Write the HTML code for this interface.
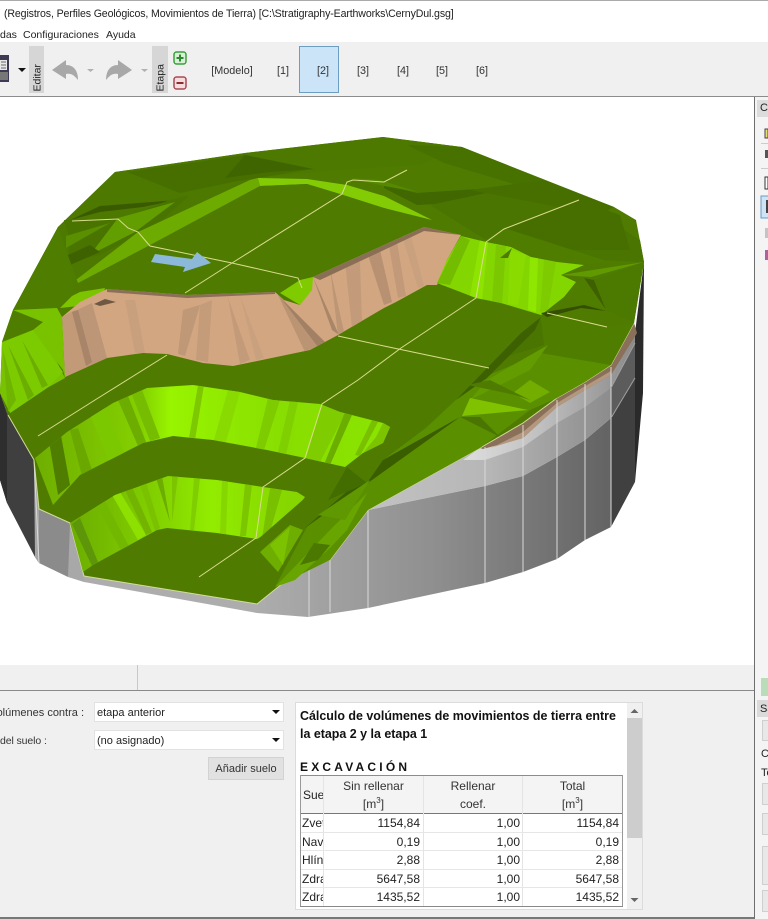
<!DOCTYPE html>
<html lang="es"><head><meta charset="utf-8"><title>CernyDul</title>
<style>
html,body{margin:0;padding:0;background:#fff}
body{position:relative;width:768px;height:919px;overflow:hidden;font-family:"Liberation Sans",sans-serif;font-size:11px;color:#222}
.a{position:absolute;white-space:nowrap}
.num{position:absolute;text-align:right;font-size:12px;line-height:18px}
.hd{position:absolute;text-align:center;font-size:12px;color:#333;line-height:18px}
.sel{position:absolute;left:95px;width:188px;background:#fff;border:0;box-shadow:0 0 0 1px #e2e2e2;font-size:11px;line-height:20px;text-indent:2px}
.sel i{position:absolute;right:3px;top:7px;border:4px solid transparent;border-top:4px solid #111;border-bottom:0}
.tab{position:absolute;top:65px;font-size:10.8px;text-align:center;width:60px;color:#333}
.box{position:absolute;left:762px;width:8px;background:#e8e8e8;border:1px solid #cfcfcf;box-sizing:border-box}
</style></head><body>

<div class="a" style="left:0;top:0;width:768px;height:1px;background:#aaa"></div>
<div class="a" style="left:4px;top:8px;font-size:10.6px;letter-spacing:-.13px">(Registros, Perfiles Geológicos, Movimientos de Tierra) [C:\Stratigraphy-Earthworks\CernyDul.gsg]</div>
<div class="a" style="left:0;top:29px;font-size:10.5px">das</div>
<div class="a" style="left:23px;top:29px;font-size:10.5px">Configuraciones</div>
<div class="a" style="left:106px;top:29px;font-size:10.5px">Ayuda</div>

<!-- toolbar -->
<div class="a" style="left:0;top:42px;width:768px;height:54px;background:#f0f0f0"></div>
<div class="a" style="left:0;top:96px;width:768px;height:1px;background:#8c8c8c"></div>
<div class="a" style="left:29px;top:46px;width:15px;height:47px;background:#d6d6d6"></div>
<div class="a" style="left:152px;top:46px;width:16px;height:47px;background:#d6d6d6"></div>
<div class="a" style="left:14px;top:63px;width:47px;transform:rotate(-90deg);font-size:10.5px;height:14px;line-height:14px;text-indent:2px">Editar</div>
<div class="a" style="left:137px;top:63px;width:47px;transform:rotate(-90deg);font-size:10.5px;height:14px;line-height:14px;text-indent:2px">Etapa</div>
<div class="a" style="left:299px;top:46px;width:38px;height:45px;background:#cce4f7;border:1px solid #6d9dbf"></div>
<div class="tab" style="left:202px">[Modelo]</div>
<div class="tab" style="left:253px">[1]</div>
<div class="tab" style="left:293px">[2]</div>
<div class="tab" style="left:333px">[3]</div>
<div class="tab" style="left:373px">[4]</div>
<div class="tab" style="left:412px">[5]</div>
<div class="tab" style="left:452px">[6]</div>

<svg class="a" style="left:0;top:42px" width="200" height="54" viewBox="0 42 200 54">
<rect x="0" y="55" width="9" height="27" fill="#3c3a55"/>
<rect x="0" y="60" width="7" height="10" fill="#e8e8e8"/>
<path d="M1 62h5M1 65h5M1 68h5" stroke="#666" stroke-width="1"/>
<rect x="0" y="72" width="8" height="8" fill="#777"/>
<path d="M18 68h8l-4 4z" fill="#111"/>
<path d="M52 70 L66 60 L66 65 C74 65 78 71 78 80 C74 75 71 73 66 74 L66 79 Z" fill="#a8a8a8"/>
<path d="M87 69h7l-3.500 3z" fill="#b0b0b0"/>
<path d="M132 70 L118 60 L118 65 C110 65 106 71 106 80 C110 75 113 73 118 74 L118 79 Z" fill="#a8a8a8"/>
<path d="M141 69h7l-3.500 3z" fill="#b0b0b0"/>
<rect x="174" y="52" width="12" height="12" rx="2.500" fill="#d8f0d8" stroke="#3aa03a" stroke-width="1.500"/>
<path d="M176.500 58h7M180 54.500v7" stroke="#2c8a2c" stroke-width="2"/>
<rect x="174" y="77" width="12" height="12" rx="2.500" fill="#f6dcdc" stroke="#a84a55" stroke-width="1.500"/>
<path d="M176.500 83h7" stroke="#8c2a35" stroke-width="2"/>
</svg>

<!-- 3D model -->
<svg class="a" style="left:0;top:97px;filter:blur(.35px)" width="754" height="568" viewBox="0 97 754 568">
<defs>
<linearGradient id="g" gradientUnits="userSpaceOnUse" x1="257" y1="0" x2="611" y2="0"><stop offset="0" stop-color="#adadad"/><stop offset=".5" stop-color="#8f8f8f"/><stop offset="1" stop-color="#636363"/></linearGradient>
<linearGradient id="g2" gradientUnits="userSpaceOnUse" x1="368" y1="0" x2="611" y2="0"><stop offset="0" stop-color="#c2c2c2"/><stop offset=".5" stop-color="#b6b6b6"/><stop offset="1" stop-color="#8c8c8c"/></linearGradient>
<linearGradient id="g3" gradientUnits="userSpaceOnUse" x1="463" y1="0" x2="635" y2="0"><stop offset="0" stop-color="#dedede"/><stop offset=".45" stop-color="#c0c0c0"/><stop offset="1" stop-color="#8a8a8a"/></linearGradient>
<linearGradient id="s1" gradientUnits="userSpaceOnUse" x1="35" y1="0" x2="390" y2="0"><stop offset="0" stop-color="#6fae00"/><stop offset=".3" stop-color="#84d000"/><stop offset=".38" stop-color="#98f400"/><stop offset=".7" stop-color="#88de00"/><stop offset="1" stop-color="#8be400"/></linearGradient>
<linearGradient id="s2" gradientUnits="userSpaceOnUse" x1="70" y1="0" x2="305" y2="0"><stop offset="0" stop-color="#6cad00"/><stop offset=".4" stop-color="#84d400"/><stop offset=".6" stop-color="#92ec00"/><stop offset="1" stop-color="#84d200"/></linearGradient>
<clipPath id="c1"><path d="M35 458L67 432L113 403L147 388L193 385L240 392L273 400L320 404L340 412L383 423L390 427L383 443L363 453L345 467L305 458L267 450L213 440L173 436L143 443L80 475L53 505Z"/></clipPath>
<clipPath id="c2"><path d="M70 523L115 495L168 476L217 480L263 487L297 492L305 497L293 513L273 530L257 539L217 533L167 528L157 530L93 565L83 572Z"/></clipPath>
<clipPath id="c3"><path d="M107 289L187 295L275 292L284 300L300 305L313 277L384 245L424 227L461 235L447 260L437 285L427 285L396 302L384 308L338 335L310 350L233 366L203 363L167 354L143 353L107 358L65 377L62 317L80 302Z"/></clipPath>
<clipPath id="c4"><path d="M461 236L486 242L511 247L531 257L557 262L584 265L561 275L576 282L564 297L541 315L501 303L476 298L437 283L447 260Z"/></clipPath>
</defs>

<!-- side walls -->
<path d="M0 393L8 415L34 460L39 563L35 557L7 503L0 480Z" fill="#3f3f3f"/>
<path d="M0 393L7 415L7 503L0 480Z" fill="#2e2e2e"/>
<path d="M34 460L39 509L39 563L35 557Z" fill="#a6a6a6"/>
<path d="M39 509L70 523L76 549L68 577L39 563Z" fill="#8b8b8b"/>
<path d="M70 523L84 576L84 582L68 577Z" fill="#a8a8a8"/>
<path d="M84 576L257 604L257 613L84 582Z" fill="#adadad"/>
<path d="M257 604L308 563L330 560L368 510L485 486L523 476L557 457L585 440L611 418L611 527L585 540L557 559L523 572L485 583L368 608L308 617L257 613Z" fill="url(#g)"/>
<path d="M368 510L480 448L523 423L557 398L585 382L611 365L611 418L585 440L557 457L523 476L485 486Z" fill="url(#g2)"/>
<path d="M463 460L480 448L523 423L557 398L585 382L611 365L635 325L635 343L611 388L585 407L557 423L523 447L485 460Z" fill="url(#g3)"/>
<path d="M611 388L635 343L635 378L611 418Z" fill="#5c5c5c"/>
<path d="M611 418L635 378L635 482L611 527Z" fill="#404040"/>
<path d="M635 333L644 262L643 393L635 482Z" fill="#2a2a2a"/>
<path d="M480 448L523 423L557 398L585 382L611 365L634 323L637 333L611 375L587 389L557 407L523 438L483 449Z" fill="#8a7058"/>
<path d="M495 446L523 432L557 403L587 385L611 371L611 375L587 389L557 407L523 438L490 448Z" fill="#b3977e"/>
<g stroke="#d9d9d9" stroke-width="1" fill="none">
<path d="M309 564V617M330 560V612M368 510V608M485 447V583M523 425V572M557 400V559M585 384V540M611 367V527"/>
<path d="M34 460L39 563M70 523L84 576"/>
</g>
<path d="M611 388L635 343M611 418L635 378" stroke="#a0a0a0" stroke-width="1" fill="none"/>

<!-- surface base -->
<path d="M0 393L2 342L13 310L58 227L115 172L245 153L383 137L462 147L614 207L636 220L644 262L634 323L611 365L585 382L557 398L523 423L480 448L368 510L330 560L308 563L257 604L84 576L70 523L39 509L34 460L8 415L0 393Z" fill="#4f7c00"/>
<path d="M8 415L34 460L39 509L70 523L84 576L257 604L308 563L330 560L368 510L480 448L523 423L557 398L585 382L611 365L634 323" fill="none" stroke="#d3dc9c" stroke-width="1"/>

<!-- back ridge facets -->
<path d="M115 172L245 153L383 137L462 147L420 165L340 170L258 178L200 205L120 250L72 283L13 310L58 227Z" fill="#4d7900"/>
<path d="M127 172L245 155L313 169L233 182L180 193Z" fill="#476f00"/>
<path d="M245 155L313 169L270 172L225 178Z" fill="#3f6500"/>
<path d="M70 220L100 206L177 200L143 207L100 212Z" fill="#3a5a00"/>
<path d="M64 220L118 219L170 200L190 195L160 222L100 255L68 262L70 240Z" fill="#4a7400"/>
<path d="M118 218L175 202L135 232L90 255Z" fill="#639e00"/>
<path d="M66 236L110 223L80 240L66 248Z" fill="#5a8f00"/>
<path d="M66 256L90 245L100 252L70 265Z" fill="#3e6200"/>
<path d="M250 180L258 178L260 186L150 245L78 283L72 283L138 232Z" fill="#6eab00"/>
<path d="M258 178L307 179L347 185L384 196L432 220L384 208L340 194L307 184L260 186Z" fill="#83cc05"/>
<path d="M58 227L66 250L78 283L72 283L80 300L57 308L13 310Z" fill="#4f7d00"/>
<path d="M407 145L462 147L544 180L517 185L444 163Z" fill="#487200"/>
<path d="M384 185L417 193L507 187L457 203L417 205L384 188Z" fill="#406700"/>
<path d="M350 178L380 180L418 192L384 186Z" fill="#568900"/>
<path d="M430 205L500 190L600 215L640 240L644 262L560 258L504 229L486 240Z" fill="#4a7500"/>
<path d="M470 190L544 180L614 207L600 215Z" fill="#476f00"/>
<path d="M504 229L579 200L620 215L630 250L560 250Z" fill="#476f00"/>
<path d="M486 240L504 228L610 262L584 265L557 262Z" fill="#4f7d00"/>
<path d="M561 275L644 262L591 277Z" fill="#609a00"/>
<path d="M584 278L606 310L594 280Z" fill="#3e6000"/>
<path d="M594 280L644 262L634 323L606 310Z" fill="#4c7900"/>
<path d="M560 295L576 282L584 278L606 310L580 302Z" fill="#4f7d00"/>

<!-- top plateau -->
<path d="M260 186L307 184L340 194L384 208L432 222L461 232L424 225L384 243L313 275L298 278L232 263L150 246Z" fill="#4f7c00"/>
<path d="M78 284L150 246L298 278L275 290L187 293L107 287L84 297Z" fill="#4f7c00"/>
<path d="M80 292L105 288L100 305L88 305L60 308L72 296Z" fill="#7cc400"/>

<!-- brown cliff -->
<path d="M107 289L187 295L275 292L284 300L300 305L313 277L384 245L424 227L461 235L447 260L437 285L427 285L396 302L384 308L338 335L310 350L233 366L203 363L167 354L143 353L107 358L65 377L62 317L80 302Z" fill="#d2a680"/>
<g clip-path="url(#c3)">
<path d="M62 317L92 303L107 358L85 368Z" fill="#bd9677"/>
<path d="M62 317L75 310L88 370L65 377Z" fill="#c29a78"/>
<path d="M72 312L78 310L92 362L86 366Z" fill="#a88568"/>
<path d="M125 300L135 300L145 353L135 353Z" fill="#c8a07d"/>
<path d="M183 310L200 305L185 356L178 354Z" fill="#bf9877"/>
<path d="M200 305L212 300L208 362L196 360Z" fill="#c49c7a"/>
<path d="M228 298L250 360L240 364Z" fill="#c39b7a"/>
<path d="M240 295L264 358L256 360Z" fill="#c9a17e"/>
<path d="M277 293L320 345L305 352Z" fill="#bb9474"/>
<path d="M280 297L326 343L318 347Z" fill="#a28064"/>
<path d="M313 277L332 330L339 335Z" fill="#a98668"/>
<path d="M330 268L338 335L344 332Z" fill="#bd9676"/>
<path d="M345 262L352 328L362 322L360 262Z" fill="#c39b7a"/>
<path d="M368 255L384 305L392 302L380 250Z" fill="#b89172"/>
<path d="M388 240L398 298L406 296L396 236Z" fill="#c29a79"/>
<path d="M402 236L418 288L424 286L410 232Z" fill="#c9a17e"/>
<path d="M107 289L275 292L275 294L187 298L107 292Z" fill="#8c6f58"/>
<path d="M313 277L384 245L424 227L461 235L424 231L384 250L320 280Z" fill="#8a6e56"/>
<path d="M94 304L105 299L116 302L100 306Z" fill="#6e5844"/>
</g>
<path d="M280 293L300 280L313 277L312 290L300 305Z" fill="#7fcb00"/>

<!-- right bright slope -->
<path d="M461 236L486 242L511 247L531 257L557 262L584 265L561 275L576 282L564 297L541 315L501 303L476 298L437 283L447 260Z" fill="#84d600"/>
<g clip-path="url(#c4)">
<path d="M461 236L470 240L450 285L437 283Z" fill="#74bc00"/>
<path d="M480 240L488 242L482 300L470 296Z" fill="#8ee400"/>
<path d="M496 245L506 246L502 305L492 302Z" fill="#7cc800"/>
<path d="M510 250L526 255L518 305L508 304Z" fill="#8adc00"/>
<path d="M530 257L538 258L536 312L528 310Z" fill="#8fe600"/>
<path d="M544 260L556 262L548 310L540 312Z" fill="#7ecc00"/>
<path d="M500 258L512 248L508 258Z" fill="#4f7c00"/>
</g>

<!-- left bright corner -->
<path d="M2 342L13 310L57 308L62 317L65 378L47 388L10 413L0 393Z" fill="#78c200"/>
<path d="M13 310L43 322L33 330L2 342Z" fill="#4f7d00"/>
<path d="M33 330L63 370L65 378L57 362Z" fill="#4f7d00"/>
<path d="M2 343L33 330L63 372L47 388L10 413Z" fill="#7ccb00"/>
<path d="M8 345L34 395L28 400Z" fill="#6bae00"/>
<path d="M22 340L48 385L42 388Z" fill="#6bae00"/>
<path d="M3 350L16 400L8 412Z" fill="#6fb400"/>

<!-- slope 1 -->
<path d="M35 458L67 432L113 403L147 388L193 385L240 392L273 400L320 404L340 412L383 423L390 427L383 443L363 453L345 467L305 458L267 450L213 440L173 436L143 443L80 475L53 505Z" fill="url(#s1)"/>
<g clip-path="url(#c1)">
<path d="M48 435L60 430L70 485L58 495Z" fill="#4f7d00"/>
<path d="M70 430L78 428L92 470L82 476Z" fill="#6aa800"/>
<path d="M90 415L105 408L125 455L110 462Z" fill="#7cc800"/>
<path d="M118 400L128 396L146 442L138 446Z" fill="#6cad00"/>
<path d="M132 395L142 390L160 438L150 441Z" fill="#76bc00"/>
<path d="M198 385L204 385L195 440L189 438Z" fill="#7dc800"/>
<path d="M228 390L240 392L226 442L214 440Z" fill="#88da00"/>
<path d="M268 398L280 400L264 450L256 448Z" fill="#7ecb00"/>
<path d="M290 400L298 402L286 455L278 452Z" fill="#80cf00"/>
<path d="M322 404L346 412L320 462L306 458Z" fill="#7fcc00"/>
<path d="M345 412L352 415L330 465L325 462Z" fill="#6cae00"/>
<path d="M372 420L378 422L360 456L355 455Z" fill="#78c000"/>
</g>
<path d="M383 423L390 427L383 443L363 453L376 437Z" fill="#7cc400"/>

<!-- slope 2 -->
<path d="M70 523L115 495L168 476L217 480L263 487L297 492L305 497L293 513L273 530L257 539L217 533L167 528L157 530L93 565L83 572Z" fill="url(#s2)"/>
<g clip-path="url(#c2)">
<path d="M72 524L80 518L98 562L92 566Z" fill="#5e960a"/>
<path d="M96 505L104 500L130 548L122 552Z" fill="#72b800"/>
<path d="M112 495L120 492L146 535L138 540Z" fill="#8ee000"/>
<path d="M125 490L132 487L152 532L146 535Z" fill="#72b400"/>
<path d="M140 485L146 482L160 528L155 531Z" fill="#7ac200"/>
<path d="M156 478L162 476L170 522Z" fill="#6cad00"/>
<path d="M172 476L178 476L172 522Z" fill="#7cc400"/>
<path d="M194 478L200 478L194 530L190 530Z" fill="#80ce00"/>
<path d="M222 480L228 481L226 534L220 534Z" fill="#86d600"/>
<path d="M245 484L252 485L246 536L240 536Z" fill="#7cc600"/>
<path d="M270 488L282 490L270 532L262 538Z" fill="#78c000"/>
<path d="M290 492L304 497L280 526Z" fill="#86d600"/>
</g>

<!-- lower right green -->
<path d="M275 587L307 527L383 460L427 427L477 380L541 353L611 365L585 382L557 398L530 410L480 448L368 510L330 560Z" fill="#5a8f00"/>
<path d="M541 317L547 317L607 327L634 323L611 365L541 353L524 333Z" fill="#4f7d00"/>
<path d="M524 333L541 320L544 345L496 360L487 368Z" fill="#4a7500"/>
<path d="M456 400L521 333L541 317L535 330L487 378Z" fill="#3d6100"/>
<path d="M487 380L548 345L530 370L470 400Z" fill="#629c00"/>
<path d="M541 313L584 305L606 311L581 308L547 317Z" fill="#344f00"/>
<path d="M513 393L530 380L550 392L530 403Z" fill="#72ad00"/>
<path d="M470 398L528 410L462 416Z" fill="#80c200"/>
<path d="M460 417L500 437L480 417Z" fill="#4a7500"/>
<path d="M468 385L490 380L530 400L515 395Z" fill="#4f7c00"/>
<path d="M305 528L460 417L383 460Z" fill="#3a5d00"/>
<path d="M328 500L347 467L367 483Z" fill="#446d00"/>
<path d="M347 467L383 445L390 430L427 427L383 460L367 483Z" fill="#4f7c00"/>
<path d="M260 552L290 525L303 530L278 572Z" fill="#6eae00"/>
<path d="M270 545L290 527L283 565Z" fill="#7cc200"/>
<path d="M275 587L330 530L367 493L347 530L330 548L295 580Z" fill="#68a500"/>
<path d="M318 515L370 480L345 520Z" fill="#5f9800"/>
<path d="M314 543L330 545L318 560L300 565Z" fill="#4b7800"/>
<path d="M257 540L305 498L293 522L260 552Z" fill="#4f7c00"/>

<!-- survey lines -->
<g fill="none" stroke="#d9dc8e" stroke-width="1">
<path d="M72 221L118 219L128 228L138 232L150 246L232 263L298 278L302 288"/>
<path d="M185 293L232 263L342 194L347 182L353 180L384 182L407 170"/>
<path d="M579 200L504 229L486 242L476 298L401 348L358 380L322 404L305 458L263 487L256 538L199 577"/>
<path d="M338 336L384 346L489 368"/>
<path d="M547 313L607 327"/>
<path d="M167 355L95 400L38 436"/>
</g>

<!-- arrow -->
<path d="M151 262L155 254L192 259L197 252L211 263L183 272L185 267Z" fill="#8cb9d9"/>
</svg>

<!-- status row -->
<div class="a" style="left:0;top:665px;width:754px;height:25px;background:#f0f0f0"></div>
<div class="a" style="left:137px;top:665px;width:1px;height:25px;background:#c8c8c8"></div>
<div class="a" style="left:0;top:690px;width:754px;height:1px;background:#8a8a8a"></div>

<!-- bottom panel -->
<div class="a" style="left:0;top:691px;width:754px;height:228px;background:#f0f0f0"></div>
<div class="a" style="left:0;top:917px;width:768px;height:2px;background:#777"></div>
<div class="a" style="right:684px;top:707px;font-size:11px;color:#333">olúmenes contra :</div>
<div class="a" style="left:0;top:735px;font-size:10.5px;letter-spacing:-.1px;color:#333">del suelo :</div>
<div class="sel" style="top:703px;height:18px">etapa anterior<i></i></div>
<div class="sel" style="top:731px;height:18px">(no asignado)<i></i></div>
<div class="a" style="left:208px;top:757px;width:76px;height:23px;background:#e1e1e1;box-shadow:inset 0 0 0 1px #d2d2d2;text-align:center;line-height:24px;font-size:11px;color:#333">Añadir suelo</div>

<!-- report -->
<div class="a" style="left:296px;top:703px;width:346px;height:206px;background:#fff;box-shadow:0 0 0 1px #dcdcdc"></div>
<div class="a" style="left:300px;top:707px;font-weight:bold;font-size:12.45px;line-height:18px;color:#111;width:326px;white-space:normal">Cálculo de volúmenes de movimientos de tierra entre<br>la etapa 2 y la etapa 1</div>
<div class="a" style="left:300px;top:760px;font-weight:bold;font-size:12px;letter-spacing:3.2px;color:#111">EXCAVACIÓN</div>

<div class="a" style="left:300px;top:776px;width:322px;height:37px;background:#f4f4f4"></div>
<div class="a" style="left:300px;top:775px;width:323px;height:1px;background:#8c8c8c"></div>
<div class="a" style="left:300px;top:813px;width:323px;height:1px;background:#777"></div>
<div class="a" style="left:300px;top:775px;width:1px;height:131px;background:#999"></div>
<div class="a" style="left:622px;top:775px;width:1px;height:131px;background:#999"></div>
<div class="a" style="left:300px;top:906px;width:323px;height:1px;background:#888"></div>
<div class="a" style="left:323px;top:776px;width:1px;height:130px;background:#e4e4e4"></div>
<div class="a" style="left:423px;top:776px;width:1px;height:130px;background:#e4e4e4"></div>
<div class="a" style="left:522px;top:776px;width:1px;height:130px;background:#e4e4e4"></div>
<div class="a" style="left:301px;top:832px;width:321px;height:1px;background:#e6e6e6"></div>
<div class="a" style="left:301px;top:850px;width:321px;height:1px;background:#e6e6e6"></div>
<div class="a" style="left:301px;top:869px;width:321px;height:1px;background:#e6e6e6"></div>
<div class="a" style="left:301px;top:887px;width:321px;height:1px;background:#e6e6e6"></div>

<div class="a" style="left:303px;top:786px;font-size:12px;line-height:18px;width:20px;overflow:hidden;color:#222">Sue</div>
<div class="hd" style="left:324px;top:777px;width:99px">Sin rellenar</div>
<div class="hd" style="left:324px;top:795px;width:99px">[m<sup style="font-size:8px;line-height:0">3</sup>]</div>
<div class="hd" style="left:424px;top:777px;width:98px">Rellenar</div>
<div class="hd" style="left:424px;top:795px;width:98px">coef.</div>
<div class="hd" style="left:523px;top:777px;width:99px">Total</div>
<div class="hd" style="left:523px;top:795px;width:99px">[m<sup style="font-size:8px;line-height:0">3</sup>]</div>

<div class="a" style="left:302px;top:814px;width:21px;overflow:hidden;font-size:12px;line-height:18px">Zvet</div>
<div class="a" style="left:302px;top:833px;width:21px;overflow:hidden;font-size:12px;line-height:18px">Nav</div>
<div class="a" style="left:302px;top:851px;width:21px;overflow:hidden;font-size:12px;line-height:18px">Hlín</div>
<div class="a" style="left:302px;top:870px;width:21px;overflow:hidden;font-size:12px;line-height:18px">Zdra</div>
<div class="a" style="left:302px;top:888px;width:21px;overflow:hidden;font-size:12px;line-height:18px">Zdra</div>

<div class="num" style="left:324px;top:814px;width:96px">1154,84</div><div class="num" style="left:424px;top:814px;width:96px">1,00</div><div class="num" style="left:523px;top:814px;width:96px">1154,84</div>
<div class="num" style="left:324px;top:833px;width:96px">0,19</div><div class="num" style="left:424px;top:833px;width:96px">1,00</div><div class="num" style="left:523px;top:833px;width:96px">0,19</div>
<div class="num" style="left:324px;top:851px;width:96px">2,88</div><div class="num" style="left:424px;top:851px;width:96px">1,00</div><div class="num" style="left:523px;top:851px;width:96px">2,88</div>
<div class="num" style="left:324px;top:870px;width:96px">5647,58</div><div class="num" style="left:424px;top:870px;width:96px">1,00</div><div class="num" style="left:523px;top:870px;width:96px">5647,58</div>
<div class="num" style="left:324px;top:888px;width:96px">1435,52</div><div class="num" style="left:424px;top:888px;width:96px">1,00</div><div class="num" style="left:523px;top:888px;width:96px">1435,52</div>

<!-- scrollbar -->
<div class="a" style="left:627px;top:703px;width:15px;height:206px;background:#f0f0f0"></div>
<div class="a" style="left:627px;top:718px;width:15px;height:120px;background:#cdcdcd"></div>
<svg class="a" style="left:627px;top:703px" width="15" height="206"><path d="M3.500 10L7.500 6L11.500 10Z" fill="#666"/><path d="M3.500 195L7.500 199L11.500 195Z" fill="#666"/></svg>

<!-- right panel -->
<div class="a" style="left:754px;top:97px;width:1px;height:822px;background:#6e6e6e"></div>
<div class="a" style="left:755px;top:97px;width:13px;height:822px;background:#f4f4f4"></div>
<div class="a" style="left:757px;top:100px;width:11px;height:17px;background:#dcdcdc;font-size:11px;line-height:17px;text-indent:3px;overflow:hidden">Co</div>
<svg class="a" style="left:755px;top:120px" width="13" height="150" viewBox="755 120 13 150">
<rect x="765" y="129" width="3" height="9" fill="#e8e070" stroke="#444" stroke-width="1"/>
<path d="M761 143.500H768M761 168.500H768" stroke="#ccc" stroke-width="1"/>
<rect x="765" y="150" width="3" height="8" fill="#555"/>
<rect x="765" y="177" width="3" height="12" fill="#fff" stroke="#333"/>
<rect x="761" y="196" width="8" height="22" fill="#cce4f7" stroke="#6d9dbf"/>
<rect x="766" y="200" width="3" height="13" fill="#444"/>
<rect x="765" y="228" width="3" height="10" fill="#c9c2c2"/>
<rect x="765" y="250" width="3" height="10" fill="#b0609a"/>
</svg>
<div class="a" style="left:761px;top:678px;width:7px;height:18px;background:#b9dcb9"></div>
<div class="a" style="left:757px;top:700px;width:11px;height:17px;background:#dadada"></div>
<div class="a" style="left:760px;top:703px;font-size:11px;width:8px;overflow:hidden">Sa</div>
<div class="box" style="top:720px;height:21px"></div>
<div class="a" style="left:761px;top:748px;font-size:11px;width:7px;overflow:hidden">C</div>
<div class="a" style="left:761px;top:767px;font-size:11px;width:7px;overflow:hidden">Te</div>
<div class="box" style="top:783px;height:22px"></div>
<div class="box" style="top:813px;height:22px"></div>
<div class="box" style="top:846px;height:39px"></div>
<div class="box" style="top:890px;height:22px"></div>
</body></html>
